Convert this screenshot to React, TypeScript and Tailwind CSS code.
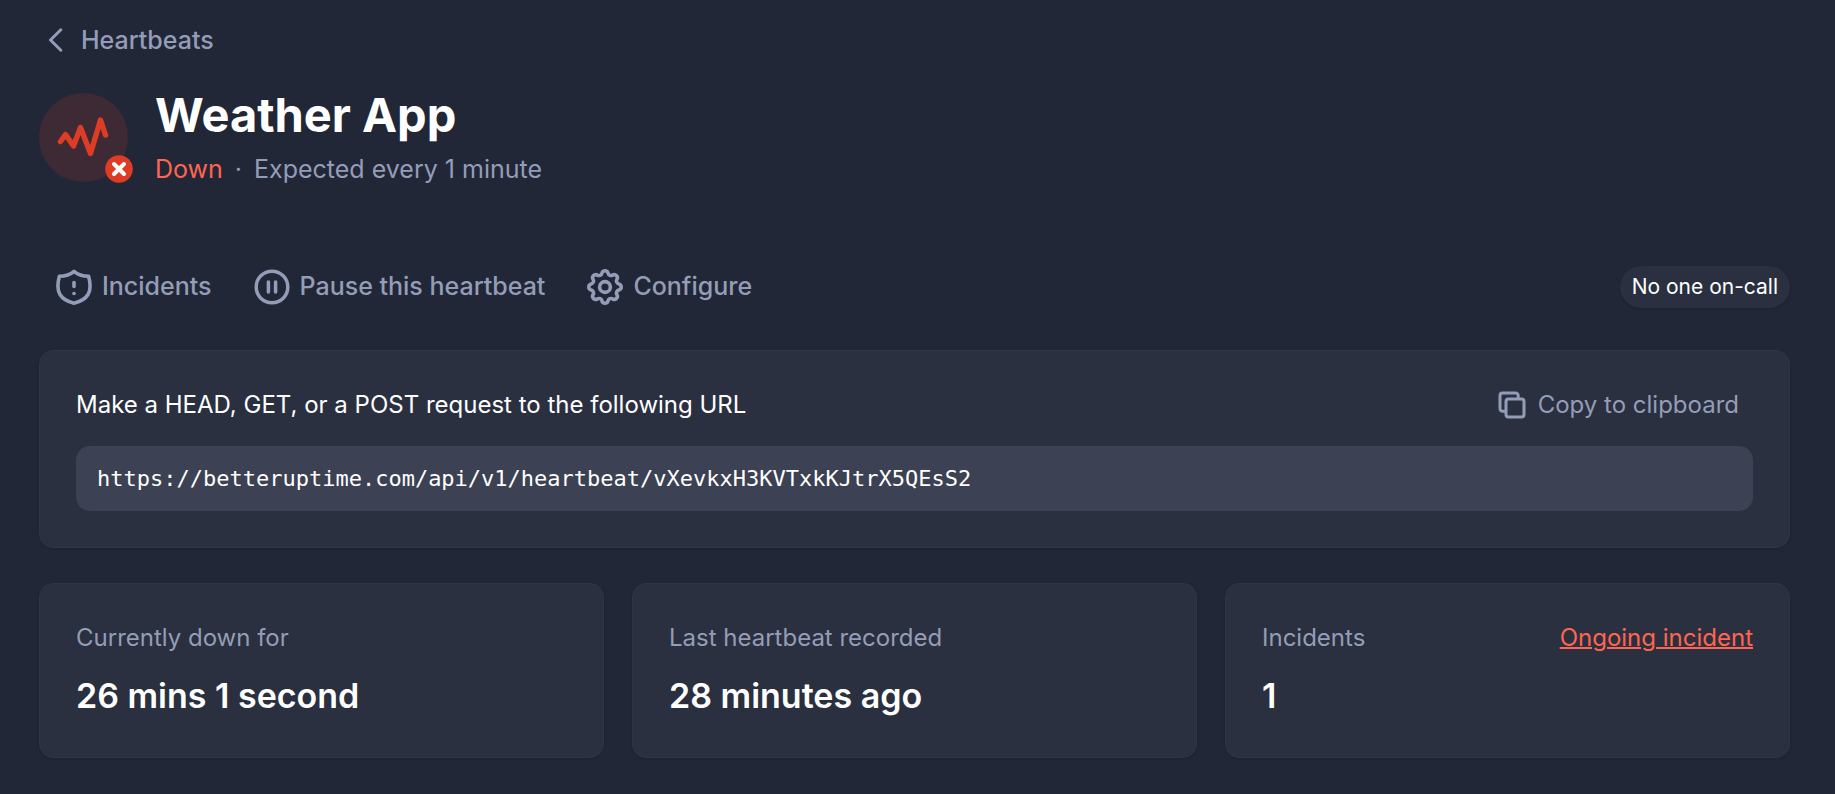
import type { ReactNode } from "react"

// ─── Data ──────────────────────────────────────────────────────────────────────

const HEARTBEAT_URL = "https://betteruptime.com/api/v1/heartbeat/vXevkxH3KVTxkKJtrX5QEsS2"

const stats = [
  { label: "Currently down for", value: "26 mins 1 second" },
  { label: "Last heartbeat recorded", value: "28 minutes ago" },
  { label: "Incidents", value: "1", link: "Ongoing incident" },
]

// ─── Icons ─────────────────────────────────────────────────────────────────────

function ShieldIcon() {
  return (
    <svg viewBox="0 0 36 36" className="size-9" fill="none" stroke="currentColor" strokeWidth="3.6" strokeLinecap="round" strokeLinejoin="round" aria-hidden="true">
      <path d="M18 2.3C14 5.8 9.5 7.1 3.4 7.3C1.3 15 1.2 20.5 3.8 25.2C6.7 30 12 32.7 18 34.2C24 32.7 29.3 30 32.2 25.2C34.8 20.5 34.7 15 32.6 7.3C26.5 7.1 22 5.8 18 2.3Z" />
      <path d="M18 13.5v4" />
      <path d="M18 24.5h.01" />
    </svg>
  )
}

function PauseIcon() {
  return (
    <svg viewBox="0 0 36 36" className="size-9" fill="none" stroke="currentColor" strokeWidth="3.5" strokeLinecap="round" aria-hidden="true">
      <circle cx="18" cy="18" r="15.8" />
      <path d="M14.4 13v10M21.6 13v10" />
    </svg>
  )
}

function GearIcon() {
  return (
    <svg viewBox="2 2 20 20" className="size-9" fill="none" stroke="currentColor" strokeWidth="2" strokeLinecap="round" strokeLinejoin="round" aria-hidden="true">
      <path d="M10.325 4.317c.426-1.756 2.924-1.756 3.35 0a1.724 1.724 0 002.573 1.066c1.543-.94 3.31.826 2.37 2.37a1.724 1.724 0 001.065 2.572c1.756.426 1.756 2.924 0 3.35a1.724 1.724 0 00-1.066 2.573c.94 1.543-.826 3.31-2.37 2.37a1.724 1.724 0 00-2.572 1.065c-.426 1.756-2.924 1.756-3.35 0a1.724 1.724 0 00-2.573-1.066c-1.543.94-3.31-.826-2.37-2.37a1.724 1.724 0 00-1.065-2.572c-1.756-.426-1.756-2.924 0-3.35a1.724 1.724 0 001.066-2.573c-.94-1.543.826-3.31 2.37-2.37.996.608 2.296.07 2.572-1.065z" />
      <circle cx="12" cy="12" r="3" />
    </svg>
  )
}

function CopyIcon() {
  return (
    <svg viewBox="0 0 28 28" className="size-7" fill="none" stroke="currentColor" strokeWidth="3" strokeLinejoin="round" strokeLinecap="round" aria-hidden="true">
      <path d="M6.5 20.2H4.5a2.5 2.5 0 0 1-2.5-2.5V4.5a2.5 2.5 0 0 1 2.5-2.5h13.2a2.5 2.5 0 0 1 2.5 2.5v2" />
      <rect x="8" y="8" width="18" height="18" rx="2.5" />
    </svg>
  )
}

function StatusBadge() {
  return (
    <div className="relative size-[89px] shrink-0 rounded-full bg-[#3d2a34]">
      <svg viewBox="0 0 89 89" className="size-full" fill="none" stroke="#dd3c25" strokeWidth="5.4" strokeLinecap="round" strokeLinejoin="round" aria-hidden="true">
        <path d="M21.5 48.5L26.5 41.5L34.5 53L41.5 34.5L51.5 60.5L61.5 27L66.5 42" />
      </svg>
      <svg viewBox="0 0 28 28" className="absolute -right-[5px] -bottom-px size-7" role="img" aria-label="Down">
        <circle cx="14" cy="14" r="13.8" fill="#dd3c25" />
        <path d="M9 9l10 10M19 9L9 19" stroke="#fff" strokeWidth="4" strokeLinecap="round" />
      </svg>
    </div>
  )
}

// ─── Building blocks ───────────────────────────────────────────────────────────

function ActionButton({ icon, children }: { icon: ReactNode; children: ReactNode }) {
  return (
    <button type="button" className="flex items-center gap-[10px] text-[25px] font-medium hover:text-white">
      {icon}
      <span className="pb-[2px]">{children}</span>
    </button>
  )
}

function Card({ className = "", children }: { className?: string; children: ReactNode }) {
  return (
    <section className={`rounded-[14px] border border-[#2f3545] bg-[#2a303f] px-9 shadow-sm ${className}`}>
      {children}
    </section>
  )
}

// ─── Page ──────────────────────────────────────────────────────────────────────

export default function App() {
  return (
    <main className="min-h-screen bg-[#222737] pt-[22px] pr-[45px] pb-9 pl-[39px] font-['Inter',sans-serif] text-[24px] leading-9 text-[#949db8]">
      <a href="#heartbeats" className="ml-[9px] flex w-fit items-center gap-[18px] text-[25px] font-medium hover:text-white">
        <svg viewBox="0 0 15 24" className="h-6 w-[15px]" fill="none" stroke="currentColor" strokeWidth="3" strokeLinecap="round" strokeLinejoin="round" aria-hidden="true">
          <path d="M12.8 1.8L2.5 12L12.8 22.2" />
        </svg>
        Heartbeats
      </a>

      <header className="mt-[27px] flex gap-[27px]">
        <div className="pt-2">
          <StatusBadge />
        </div>
        <div>
          <h1 className="text-[47px] leading-[60px] font-bold text-white">Weather App</h1>
          <p className="mt-[6px] flex gap-3 text-[25px]">
            <span className="text-[#ff6550]">Down</span>
            <span>·</span>
            <span>Expected every 1 minute</span>
          </p>
        </div>
      </header>

      <div className="mt-[79px] flex items-center justify-between">
        <div className="ml-[17px] flex items-center gap-[42px]">
          <ActionButton icon={<ShieldIcon />}>Incidents</ActionButton>
          <ActionButton icon={<PauseIcon />}>Pause this heartbeat</ActionButton>
          <ActionButton icon={<GearIcon />}>Configure</ActionButton>
        </div>
        <span className="rounded-full bg-[#2a303f] px-3 py-[3px] text-[21px] text-white shadow-sm">No one on-call</span>
      </div>

      <Card className="mt-[42px] py-9">
        <div className="flex items-center justify-between">
          <label htmlFor="heartbeat-url" className="text-white">
            Make a HEAD, GET, or a POST request to the following URL
          </label>
          <button type="button" className="flex items-center gap-3 pr-[14px] hover:text-white">
            <CopyIcon />
            Copy to clipboard
          </button>
        </div>
        <input
          id="heartbeat-url"
          readOnly
          value={HEARTBEAT_URL}
          className="mt-[23px] block h-[65px] w-full rounded-[14px] bg-[#3c4153] px-[21px] font-['DejaVu_Sans_Mono',monospace] text-[22px] text-white outline-none"
        />
      </Card>

      <div className="mt-[35px] grid grid-cols-3 gap-7">
        {stats.map(({ label, value, link }) => (
          <Card key={label} className="pt-9 pb-[37px]">
            <div className="flex items-center justify-between">
              <h2>{label}</h2>
              {link && (
                <a href="#incident" className="text-[#ff6550] underline decoration-2">
                  {link}
                </a>
              )}
            </div>
            <p className="mt-4 text-[34px] leading-[48px] font-semibold text-white">{value}</p>
          </Card>
        ))}
      </div>
    </main>
  )
}
